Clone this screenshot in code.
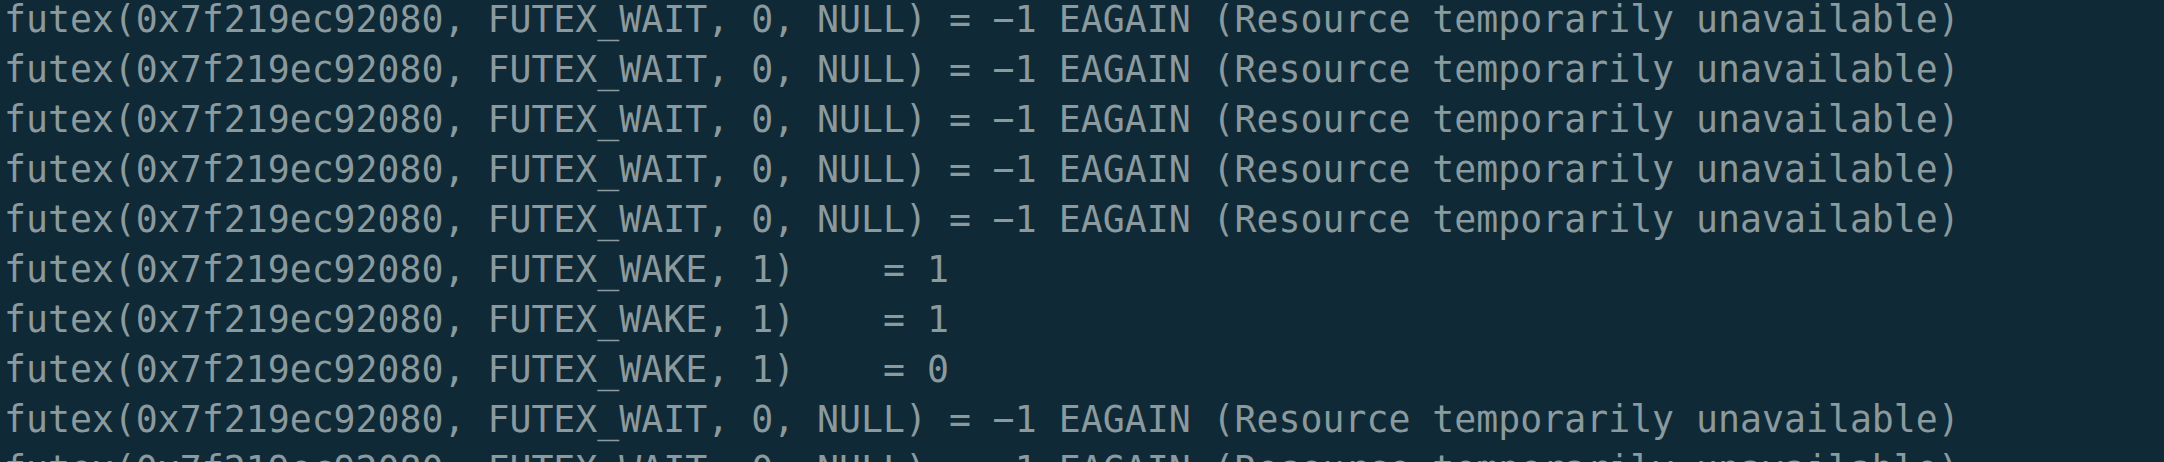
const WAIT = 'futex(0x7f219ec92080, FUTEX_WAIT, 0, NULL) = \u22121 EAGAIN (Resource temporarily unavailable)'

const lines = [
  WAIT,
  WAIT,
  WAIT,
  WAIT,
  WAIT,
  'futex(0x7f219ec92080, FUTEX_WAKE, 1)    = 1',
  'futex(0x7f219ec92080, FUTEX_WAKE, 1)    = 1',
  'futex(0x7f219ec92080, FUTEX_WAKE, 1)    = 0',
  WAIT,
  WAIT,
]

export default function App() {
  return (
    <div className="h-[462px] w-full overflow-hidden bg-[#0f2a36]">
      <pre className="-mt-[5px] pl-[4px] font-['DejaVu_Sans_Mono',monospace] text-[36.5px] leading-[50px] text-[#8b9a9e] whitespace-pre">
        {lines.map((l, i) => (
          <div key={i}>{l}</div>
        ))}
      </pre>
    </div>
  )
}
